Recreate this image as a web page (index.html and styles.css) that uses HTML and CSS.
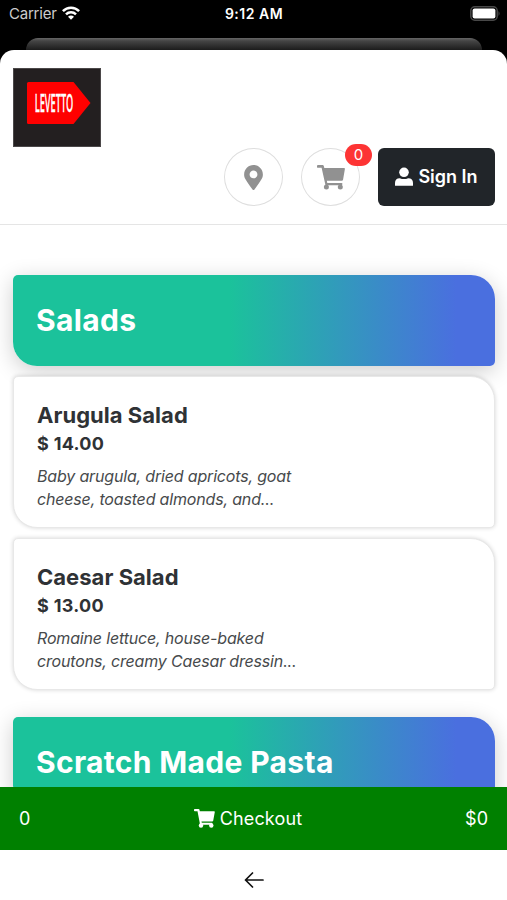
FILE: index.html
```html
<!DOCTYPE html>
<html lang="en">
<head>
<meta charset="utf-8">
<title>Levetto</title>
<link rel="stylesheet" href="styles.css">
</head>
<body>
<div class="phone">
  <div class="status">
    <div class="carrier"><span class="carrier-name">Carrier</span>
      <svg class="wifi" viewBox="0 0 18 14"><g fill="none" stroke="#fff" stroke-width="2.5"><path d="M.9 5.2C5.4.5 12.6.5 17.1 5.2"/><path d="M4 8.4c2.8-2.8 7.2-2.8 10 0"/></g><path d="M9 13.8 6 10.7c1.7-1.5 4.3-1.5 6 0z" fill="#fff"/></svg>
    </div>
    <span class="time">9:12 AM</span>
    <svg class="battery" viewBox="0 0 31 16"><rect x=".8" y=".8" width="26.4" height="13.4" rx="4" fill="none" stroke="#484848" stroke-width="1.5"/><rect x="2.6" y="2.6" width="22.8" height="9.8" rx="2" fill="#fff"/><path d="M28.5 5q2.2 2.5 0 5z" fill="#484848"/></svg>
  </div>
  <div class="back-sheet"></div>
  <div class="sheet">
    <header class="header">
      <svg class="logo" viewBox="0 0 88 79"><rect x=".5" y=".5" width="87" height="78" fill="#231f20" stroke="#4b4849"/><path d="M15.5 14H60.500L77.500 35 60.500 56H15.500q-1.500 0-1.500-1.500v-39Q14 14 15.500 14z" fill="#f00"/><text class="logo-text" transform="translate(21.700 44) scale(.46 1)" textLength="84" lengthAdjust="spacingAndGlyphs">LEVETTO</text></svg>
      <div class="actions">
        <button class="round"><svg class="pin" viewBox="0 0 384 512"><path fill="#919191" d="M172.268 501.670C26.970 291.031 0 269.413 0 192 0 85.961 85.961 0 192 0s192 85.961 192 192c0 77.413-26.970 99.031-172.268 309.670-9.535 13.774-29.930 13.773-39.464 0zM192 272c44.183 0 80-35.817 80-80s-35.817-80-80-80-80 35.817-80 80 35.817 80 80 80z"/></svg></button>
        <button class="round"><svg class="cart" viewBox="0 0 28 25"><g fill="#919191"><path d="M0 1Q0 .1 1 .1H5.700Q6.500.1 6.800 1L7.300 3.100H27.100Q28.100 3.100 27.900 4L26.100 14.500Q25.900 15.700 24.700 15.700H9.800L10.300 18H24.500Q25.600 18 25.400 19L25 20.300H8.500L4.600 2.800H1Q0 2.800 0 1.900z"/><circle cx="9.400" cy="22" r="2.500"/><circle cx="23.300" cy="22" r="2.500"/></g></svg><span class="badge">0</span></button>
        <button class="sign-in"><svg class="user" viewBox="0 0 18 18"><circle cx="9" cy="4.800" r="4.800" fill="#fff"/><path d="M0 18v-2.500Q0 10.700 4.800 10.700 9 12.400 13.200 10.700 18 10.700 18 15.500V18q0 .3-.5.300H.5Q0 18.300 0 18z" fill="#fff"/></svg><span>Sign In</span></button>
      </div>
    </header>
    <main class="menu">
      <h2 class="banner">Salads</h2>
      <article class="card">
        <h3>Arugula Salad</h3>
        <p class="price">$ 14.00</p>
        <p class="desc">Baby arugula, dried apricots, goat<br>cheese, toasted almonds, and...</p>
      </article>
      <article class="card">
        <h3>Caesar Salad</h3>
        <p class="price">$ 13.00</p>
        <p class="desc">Romaine lettuce, house-baked<br>croutons, creamy Caesar dressin...</p>
      </article>
      <h2 class="banner second">Scratch Made Pasta</h2>
    </main>
    <div class="checkout">
      <span>0</span>
      <span class="checkout-label"><svg class="cart-small" viewBox="0 0 21 19"><g fill="#fff"><path d="M.8 0H4.500Q5.300 0 5.500.8L5.800 2.200H20Q21 2.200 20.800 3.100L19.200 11.700Q19 12.500 18.200 12.500H7.500L7.800 13.700H17.700Q18.600 13.700 18.400 14.500L18 15.800H6.100L3.500 2.300H.8Q0 2.300 0 1.500V.8Q0 0 .8 0z"/><circle cx="7" cy="16.500" r="2.200"/><circle cx="17.300" cy="16.500" r="2.200"/></g></svg>Checkout</span>
      <span>$0</span>
    </div>
    <nav class="nav"><svg class="back" viewBox="0 0 20 16"><path d="M19 8H1.500M8.500 1l-7 7 7 7" fill="none" stroke="#111" stroke-width="1.700" stroke-linecap="round" stroke-linejoin="round"/></svg></nav>
  </div>
</div>
</body>
</html>
```
FILE: styles.css
```css
* { box-sizing: border-box; }
body { margin: 0; font-family: Inter, sans-serif; background: #000; }
h2, h3, p { margin: 0; }
button { border: 0; padding: 0; font-family: inherit; }
svg { display: block; flex: none; }
.phone { width: 507px; height: 900px; display: flex; flex-direction: column; overflow: hidden; }
.status { height: 38px; flex: none; display: grid; grid-template-columns: 1fr auto 1fr; align-items: start; padding: 5px 6px 0 9px; color: #fff; }
.carrier { display: flex; font-size: 15px; line-height: 18px; color: #ccc; }
.carrier-name { width: 53px; letter-spacing: -.22px; }
.wifi { width: 18px; height: 14px; margin-top: 1px; }
.time { font-size: 14px; line-height: 18px; font-weight: 600; letter-spacing: .5px; margin-left: -2px; }
.battery { width: 31px; height: 16px; justify-self: end; margin-top: 1px; }
.back-sheet { height: 12px; flex: none; margin: 0 25px 0 26px; border-radius: 12px 12px 0 0; background: linear-gradient(#666, #444 25%, #1c1c1c); }
.sheet { height: 850px; background: #fff; border-radius: 14px 14px 0 0; overflow: hidden; display: flex; flex-direction: column; }
.header { height: 175px; flex: none; padding: 18px 12px 0 13px; border-bottom: 1.500px solid #e5e5e5; }
.logo { width: 88px; height: 79px; }
.logo-text { font-family: "Open Sans", sans-serif; font-size: 26px; font-weight: 600; fill: #fff; stroke: #fff; stroke-width: .3px; }
.actions { display: flex; justify-content: flex-end; margin-top: 1px; gap: 18px; height: 58px; }
.round { position: relative; width: 59px; height: 58px; border: 1px solid #dedede; border-radius: 50%; background: #fff; display: grid; place-items: center; }
.pin { width: 19px; height: 25px; }
.cart { width: 28px; height: 25px; }
.badge { position: absolute; top: -5px; right: -13px; width: 27px; height: 22px; border-radius: 12px; background: #fd3434; color: #fff; font-size: 15px; line-height: 22px; text-align: center; }
.sign-in { width: 117px; height: 58px; border-radius: 6px; background: #212529; color: #fff; display: flex; justify-content: center; align-items: center; gap: 5px; padding-bottom: 2px; font-size: 18px; font-weight: 600; letter-spacing: 0; }
.user { width: 18px; height: 19px; }
.menu { flex: 1; min-height: 0; overflow: hidden; padding: 50px 12px 0 13px; }
.banner { height: 91px; padding: 0 23px; border-radius: 5px 24px 5px 24px; background: linear-gradient(90deg, #1bc29b 45%, #4a6fdf 92%); color: #fff; font-size: 30px; line-height: 90px; font-weight: 700; letter-spacing: .33px; box-shadow: 0 5px 22px rgba(0, 0, 0, .2); }
.card { height: 152px; position: relative; margin-top: 10px; padding: 26px 23px; border-radius: 5px 24px 5px 24px; background: #fff; border: 1px solid #e8e8e8; box-shadow: 0 0 4px rgba(0, 0, 0, .17); color: #2f3235; }
.banner + .card { margin-top: 9.500px; }
.card h3 { font-size: 22px; line-height: 25px; font-weight: 700; letter-spacing: .03px; }
.price { font-size: 18px; font-weight: 700; line-height: 22px; margin-top: 5px; letter-spacing: .3px; }
.desc { font-size: 16px; line-height: 23px; font-style: italic; margin-top: 10px; color: #474a4c; white-space: nowrap; letter-spacing: -.17px; }
.banner.second { margin-top: 27.500px; }
.checkout { height: 63.500px; flex: none; background: #008000; color: #fff; padding: 0 19px; display: grid; grid-template-columns: 1fr auto 1fr; align-items: center; font-size: 18px; }
.checkout > :last-child { text-align: right; }
.checkout-label { display: flex; align-items: center; gap: 5px; letter-spacing: .15px; margin-right: 11px; }
.cart-small { width: 21px; height: 19px; }
.nav { height: 50px; flex: none; display: grid; place-items: center; padding-top: 10px; }
.back { width: 20px; height: 16px; }
```
